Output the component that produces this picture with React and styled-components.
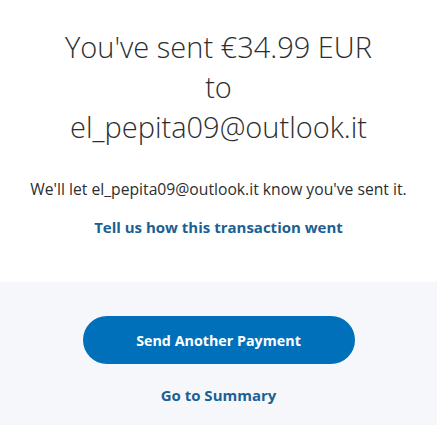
import React from "react";
import styled, { createGlobalStyle } from "styled-components";

const Global = createGlobalStyle`
  html, body { margin: 0; padding: 0; background: #ffffff; }
  body { font-family: "Open Sans", "Liberation Sans", sans-serif; }
`;

const Page = styled.div`
  width: 437px;
  height: 425px;
  display: flex;
  flex-direction: column;
  overflow: hidden;
`;

const Top = styled.section`
  background: #ffffff;
  height: 282px;
  display: flex;
  flex-direction: column;
  align-items: center;
  padding-top: 27px;
  box-sizing: border-box;
`;

const Title = styled.h1`
  margin: 0;
  font-weight: 300;
  font-size: 29px;
  line-height: 40px;
  color: #2c2e2f;
  text-align: center;
`;

const Note = styled.p`
  margin: 32px 0 0;
  font-size: 15.7px;
  line-height: 20px;
  color: #2c2e2f;
  text-align: center;
  white-space: nowrap;
`;

const Link = styled.a`
  margin-top: ${(p) => p.$top || 0}px;
  font-weight: 700;
  font-size: ${(p) => p.$size || 15}px;
  line-height: 20px;
  color: #1c5f93;
  text-decoration: none;
  text-align: center;
`;

const Bottom = styled.section`
  flex: 1;
  background: #f5f7fa;
  display: flex;
  flex-direction: column;
  align-items: center;
  padding-top: 34px;
`;

const Button = styled.button`
  width: 272px;
  height: 48px;
  border: none;
  border-radius: 24px;
  background: #0070ba;
  color: #ffffff;
  font-family: "Open Sans", "Liberation Sans", sans-serif;
  font-weight: 700;
  font-size: 14.3px;
`;

export default function App() {
  return (
    <Page>
      <Global />
      <Top>
        <Title>
          You've sent €34.99 EUR
          <br />
          to
          <br />
          el_pepita09@outlook.it
        </Title>
        <Note>We'll let el_pepita09@outlook.it know you've sent it.</Note>
        <Link $top={18}>Tell us how this transaction went</Link>
      </Top>
      <Bottom>
        <Button>Send Another Payment</Button>
        <Link $top={21} $size={15}>Go to Summary</Link>
      </Bottom>
    </Page>
  );
}
